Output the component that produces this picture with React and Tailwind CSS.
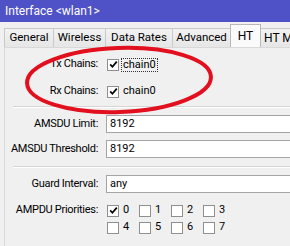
import React from 'react';

const Check = () => (
  <svg width="9" height="9" viewBox="0 0 9 9" className="block">
    <path d="M1.2 4.4 L3.4 6.8 L7.8 1.6" fill="none" stroke="#000" strokeWidth="1.7" />
  </svg>
);

const Box = ({ checked }) => (
  <span className="w-[12px] h-[12px] border border-[#8e8f8f] bg-white flex items-center justify-center shrink-0">
    {checked && <Check />}
  </span>
);

const Label = ({ children }) => (
  <div className="w-[97px] text-right pr-[4px] shrink-0 tracking-[-0.3px]">{children}</div>
);

const Field = ({ value }) => (
  <div className="flex-1 h-[18px] bg-white border-y border-l border-[#a5a5a5] pl-[3px] flex items-center">
    {value}
  </div>
);

const tabs = [
  { name: 'General', w: 'w-[49px]' },
  { name: 'Wireless', w: 'w-[52px]' },
  { name: 'Data Rates', w: 'w-[67px]' },
  { name: 'Advanced', w: 'w-[58px]' },
];

export default function App() {
  return (
    <div
      className="relative w-[290px] h-[246px] bg-[#f0f0f0] overflow-hidden text-[11px] text-black"
      style={{ fontFamily: 'Roboto, "Liberation Sans", sans-serif' }}
    >
      <div className="h-[22px] bg-[#4f52c7] text-white text-[12px] pl-[5px] flex items-center">
        Interface &lt;wlan1&gt;
      </div>

      {/* tabs */}
      <div className="flex items-end h-[25px] pl-[4px]">
        {tabs.map((t) => (
          <div
            key={t.name}
            className={`${t.w} shrink-0 h-[19px] border-t border-l border-[#c9c9c9] bg-gradient-to-b from-[#f2f2f2] to-[#e6e6e6] flex items-center justify-center text-[11.5px]`}
          >
            {t.name}
          </div>
        ))}
        <div className="w-[31px] shrink-0 h-[23px] border-x border-t border-[#b9b9b9] bg-[#fafafa] flex items-center justify-center text-[12px]">
          HT
        </div>
        <div className="flex-1 min-w-0 overflow-hidden h-[19px] border-t border-[#c9c9c9] bg-gradient-to-b from-[#f2f2f2] to-[#e6e6e6] flex items-center pl-[3px] text-[12px] whitespace-nowrap">
          HT MCS
        </div>
      </div>

      {/* panel */}
      <div className="ml-[4px] border-l border-t border-[#d9d9d9] h-[200px] bg-[#f0f0f0] pt-[8px]">
        <div className="flex items-center h-[17px]">
          <Label>Tx Chains:</Label>
          <div className="flex items-center gap-[2px] pl-[5px]">
            <Box checked />
            <span className="border border-dotted border-[#333] px-[1px] leading-[12px]">chain0</span>
          </div>
        </div>
        <div className="flex items-center h-[17px] mt-[10px]">
          <Label>Rx Chains:</Label>
          <div className="flex items-center gap-[3px] pl-[5px]">
            <Box checked />
            <span className="px-[1px]">chain0</span>
          </div>
        </div>

        <div className="ml-[8px] mt-[6px] h-[2px] border-t border-[#d5d5d5] border-b border-b-white" />

        <div className="flex items-center mt-[7px]">
          <Label>AMSDU Limit:</Label>
          <div className="flex-1 pl-[4px] flex">
            <Field value="8192" />
          </div>
        </div>
        <div className="flex items-center mt-[7px]">
          <Label>AMSDU Threshold:</Label>
          <div className="flex-1 pl-[4px] flex">
            <Field value="8192" />
          </div>
        </div>

        <div className="ml-[8px] mt-[8px] h-[2px] border-t border-[#d5d5d5] border-b border-b-white" />

        <div className="flex items-center mt-[7px]">
          <Label>Guard Interval:</Label>
          <div className="flex-1 pl-[4px] flex">
            <Field value="any" />
          </div>
        </div>

        <div className="flex mt-[9px]">
          <Label>
            <div className="h-[17px] flex items-center justify-end">AMPDU Priorities:</div>
          </Label>
          <div className="grid grid-cols-[32px_32px_32px_32px] pl-[5px]">
            {[0, 1, 2, 3, 4, 5, 6, 7].map((n) => (
              <div key={n} className="flex items-center gap-[4px] h-[17px]">
                <Box checked={n === 0} />
                <span>{n}</span>
              </div>
            ))}
          </div>
        </div>
      </div>

      {/* red annotation ellipse */}
      <svg className="absolute left-0 top-0 pointer-events-none" width="290" height="246">
        <ellipse
          cx="119"
          cy="80"
          rx="92"
          ry="32"
          transform="rotate(-2 119 80)"
          fill="none"
          stroke="#e2101e"
          strokeWidth="4"
        />
      </svg>
    </div>
  );
}
